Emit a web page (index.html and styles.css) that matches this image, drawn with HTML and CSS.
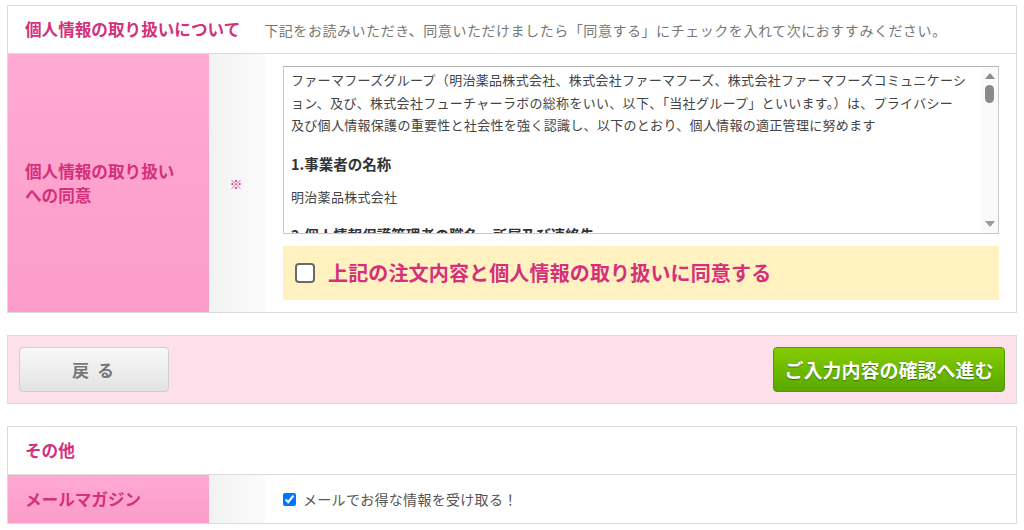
FILE: index.html
```html
<!DOCTYPE html>
<html lang="ja">
<head>
<meta charset="utf-8">
<title>個人情報の取り扱いについて</title>
<link rel="stylesheet" href="styles.css">
</head>
<body>
<div class="page">
  <section class="box">
    <div class="box-head">
      <h2 class="head-title">個人情報の取り扱いについて</h2>
      <p class="head-note">下記をお読みいただき、同意いただけましたら「同意する」にチェックを入れて次におすすみください。</p>
    </div>
    <div class="row row-tall">
      <div class="row-label">個人情報の取り扱い<br>への同意</div>
      <div class="row-mark">※</div>
      <div class="row-body row-body-tall">
        <div class="terms">
          <div class="terms-text">
            <p class="terms-p">ファーマフーズグループ（明治薬品株式会社、株式会社ファーマフーズ、株式会社ファーマフーズコミュニケーシ<br>ョン、及び、株式会社フューチャーラボの総称をいい、以下、「当社グループ」といいます。）は、プライバシー<br>及び個人情報保護の重要性と社会性を強く認識し、以下のとおり、個人情報の適正管理に努めます</p>
            <h3 class="terms-h">1.事業者の名称</h3>
            <p class="terms-p terms-name">明治薬品株式会社</p>
            <h3 class="terms-h terms-h2">2.個人情報保護管理者の職名、所属及び連絡先</h3>
          </div>
          <div class="scrollbar">
            <span class="sb-up"></span>
            <span class="sb-thumb"></span>
            <span class="sb-space"></span>
            <span class="sb-down"></span>
          </div>
        </div>
        <label class="agree">
          <span class="agree-box"></span>
          <span class="agree-text">上記の注文内容と個人情報の取り扱いに同意する</span>
        </label>
      </div>
    </div>
  </section>

  <div class="actions">
    <button class="btn-back" type="button">戻 る</button>
    <button class="btn-next" type="button">ご入力内容の確認へ進む</button>
  </div>

  <section class="box">
    <div class="box-head">
      <h2 class="head-title">その他</h2>
    </div>
    <div class="row row-short">
      <div class="row-label">メールマガジン</div>
      <div class="row-mark"></div>
      <div class="row-body row-body-short">
        <label class="mail">
          <input class="mail-check" type="checkbox" checked>
          <span class="mail-text">メールでお得な情報を受け取る！</span>
        </label>
      </div>
    </div>
  </section>
</div>
</body>
</html>
```

FILE: styles.css
```css
* { box-sizing: border-box; }

html, body {
  margin: 0;
  padding: 0;
  background: #ffffff;
}

body {
  font-family: "Noto Sans CJK JP", "Noto Sans", sans-serif;
  color: #333;
}

.page {
  padding: 5px 7px 0 7px;
}

.box {
  border: 1px solid #dcdcdc;
  background: #fff;
}

.box-head {
  display: flex;
  align-items: center;
  height: 48px;
  padding: 0 0 0 17px;
  border-bottom: 1px solid #dcdcdc;
}

.head-title {
  margin: 0;
  font-size: 16.6px;
  font-weight: bold;
  color: #d4307c;
  line-height: 1;
}

.head-note {
  margin: 0 0 0 24px;
  font-size: 14px;
  letter-spacing: 0.55px;
  color: #777;
  line-height: 1;
}

.row {
  display: flex;
}

.row-tall { height: 258px; }
.row-short { height: 48px; }

.row-label {
  width: 201px;
  flex: none;
  display: flex;
  align-items: center;
  padding-left: 17px;
  background: linear-gradient(#ffaad2, #fc9cc9);
  color: #d4307c;
  font-weight: bold;
  font-size: 16.6px;
  line-height: 24px;
}

.row-mark {
  width: 56px;
  flex: none;
  display: flex;
  align-items: center;
  justify-content: center;
  padding-right: 2px;
  background: linear-gradient(to right, #f1f2f2, #fbfbfb);
  color: #e2337f;
  font-size: 13px;
  font-weight: bold;
}

.row-body {
  flex: 1;
  padding: 0 17px 0 18px;
}

.row-body-tall {
  padding-top: 12px;
  padding-bottom: 12px;
  display: flex;
  flex-direction: column;
  gap: 12px;
}

.row-body-short {
  display: flex;
  align-items: center;
}

.terms {
  height: 168px;
  display: flex;
  border: 1px solid #c9c9c9;
  border-top-color: #b5b5b5;
  overflow: hidden;
  background: #fff;
}

.terms-text {
  flex: 1;
  padding: 2px 0 0 7px;
  overflow: hidden;
  white-space: nowrap;
}

.terms-p {
  margin: 0;
  font-size: 13px;
  letter-spacing: 0.3px;
  line-height: 22.5px;
  color: #444;
}

.terms-h {
  margin: 16px 0 0 0;
  font-size: 14.5px;
  font-weight: bold;
  line-height: 22px;
  color: #333;
}

.terms-name {
  margin-top: 11px;
}

.terms-h2 {
  margin-top: 16px;
}

.scrollbar {
  width: 17px;
  flex: none;
  display: flex;
  flex-direction: column;
  align-items: center;
  padding: 6px 0 6px;
  background: #fafafa;
}

.sb-up {
  width: 0;
  height: 0;
  border-left: 5px solid transparent;
  border-right: 5px solid transparent;
  border-bottom: 6px solid #8a8a8a;
}

.sb-thumb {
  margin-top: 6px;
  width: 9px;
  height: 18px;
  border-radius: 5px;
  background: #8a8a8a;
}

.sb-space { flex: 1; }

.sb-down {
  width: 0;
  height: 0;
  border-left: 5px solid transparent;
  border-right: 5px solid transparent;
  border-top: 6px solid #9a9a9a;
}

.agree {
  height: 54px;
  display: flex;
  align-items: center;
  padding-left: 12px;
  background: #fff1c0;
}

.agree-box {
  width: 20px;
  height: 20px;
  border: 2px solid #6a6a6a;
  border-radius: 4px;
  background: #fff;
  flex: none;
}

.agree-text {
  margin-left: 13px;
  font-size: 20px;
  letter-spacing: 0.15px;
  font-weight: bold;
  color: #d4307c;
  line-height: 1;
}

.actions {
  margin: 22px 0 22px 0;
  height: 69px;
  display: flex;
  align-items: center;
  justify-content: space-between;
  padding: 0 11px;
  border: 1px solid #dcdcdc;
  background: #fde0ea;
}

.btn-back {
  width: 150px;
  height: 45px;
  border: 1px solid #cfcfcf;
  border-radius: 4px;
  background: linear-gradient(#f8f8f8, #e3e3e3);
  font-family: "Noto Sans CJK JP", sans-serif;
  font-size: 17px;
  font-weight: bold;
  color: #777;
  letter-spacing: 2px;
  padding: 0;
}

.btn-next {
  width: 232px;
  height: 45px;
  border: 1px solid #4f9a08;
  border-radius: 4px;
  background: linear-gradient(#84cc00, #5aa800);
  font-family: "Noto Sans CJK JP", sans-serif;
  font-size: 19px;
  font-weight: bold;
  color: #fff;
  text-shadow: 0 1px 1px rgba(0, 60, 0, 0.55);
  padding: 0;
}

.mail {
  display: flex;
  align-items: center;
}

.mail-check {
  margin: 0;
  width: 13px;
  height: 13px;
}

.mail-text {
  margin-left: 7px;
  font-size: 14px;
  letter-spacing: 0.3px;
  color: #555;
  line-height: 1;
}
```
